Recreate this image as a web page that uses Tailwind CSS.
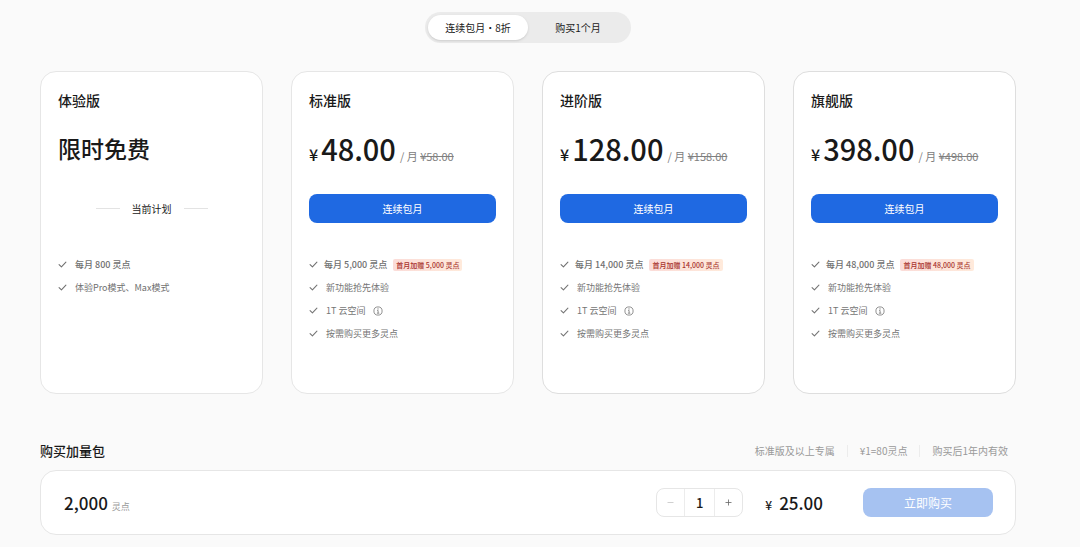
<!DOCTYPE html>
<html lang="zh-CN">
<head>
    <meta charset="UTF-8">
    <meta name="viewport" content="width=device-width, initial-scale=1.0">
    <script src="https://cdn.jsdelivr.net/npm/@tailwindcss/browser@4"></script>
    <title>购买套餐</title>
</head>
<body class="bg-[#fafafa] text-[#191919] font-['Noto_Sans_CJK_SC',sans-serif]">

    <!-- Shared icons -->
    <svg class="hidden">
        <symbol id="check" viewBox="0 0 10 10">
            <path d="M1.2 5.2 L3.8 7.6 L8.8 2.4" fill="none" stroke="currentColor" stroke-width="1.2" stroke-linecap="round" stroke-linejoin="round"/>
        </symbol>
        <symbol id="info" viewBox="0 0 10 10">
            <circle cx="5" cy="5" r="4.1" fill="none" stroke="currentColor" stroke-width="0.8"/>
            <path d="M4.2 4.5 H5.1 V7.1 M3.9 7.2 H6.3" fill="none" stroke="currentColor" stroke-width="0.8"/>
            <circle cx="5" cy="2.9" r="0.6" fill="currentColor"/>
        </symbol>
    </svg>

    <main class="pl-10 pr-16 pt-3 pb-3">
        <!-- Billing switch -->
        <div class="flex w-fit mx-auto rounded-full bg-[#ebebeb] p-[3px] text-[10px] leading-[25px]">
            <button type="button" class="w-[100px] rounded-full bg-white shadow-sm cursor-pointer">连续包月・8折</button>
            <button type="button" class="w-[100px] rounded-full cursor-pointer">购买1个月</button>
        </div>

        <!-- Plans -->
        <div class="mt-7 grid grid-cols-4 gap-7">
            <!-- Trial -->
            <section class="rounded-2xl border border-[#e6e6e6] bg-white px-[17px] pt-4 pb-12">
                <h2 class="text-[14px] leading-6 font-medium">体验版</h2>
                <p class="mt-4 text-[23px] leading-10 font-medium">限时免费</p>
                <div class="mt-[26px] flex h-[29px] items-center justify-center gap-3 text-[10px]">
                    <span class="h-px w-6 bg-[#e3e3e3]"></span>
                    <span>当前计划</span>
                    <span class="h-px w-6 bg-[#e3e3e3]"></span>
                </div>
                <ul class="mt-[30px] text-[9px] leading-[23px] text-[#707070]">
                    <li class="flex items-center gap-2 font-medium"><svg class="size-[9px]"><use href="#check"/></svg>每月 800 灵点</li>
                    <li class="flex items-center gap-2"><svg class="size-[9px]"><use href="#check"/></svg>体验Pro模式、Max模式</li>
                </ul>
            </section>

            <!-- Standard -->
            <section class="rounded-2xl border border-[#e6e6e6] bg-white px-[17px] pt-4 pb-12">
                <h2 class="text-[14px] leading-6 font-medium">标准版</h2>
                <p class="mt-4 flex h-10 items-baseline whitespace-nowrap">
                    <span class="text-[16px] font-medium">¥</span>
                    <span class="ml-[3px] text-[29px] leading-10 font-medium">48.00</span>
                    <span class="ml-1 text-[11px] text-[#808080]">/ 月 <del>¥58.00</del></span>
                </p>
                <button type="button" class="mt-[26px] h-[29px] w-full rounded-lg bg-[#1f69e2] text-[10px] text-white cursor-pointer">连续包月</button>
                <ul class="mt-[30px] text-[9px] leading-[23px] text-[#757575]">
                    <li class="flex items-center gap-[6px] whitespace-nowrap font-medium text-[#707070]"><svg class="size-[9px]"><use href="#check"/></svg>每月 5,000 灵点<span class="rounded-xs bg-linear-to-r from-[#fbdcd8] to-[#ffeadb] px-[3px] text-[7px] leading-3 text-[#a8322d]">首月加赠 5,000 灵点</span></li>
                    <li class="flex items-center gap-2"><svg class="size-[9px]"><use href="#check"/></svg>新功能抢先体验</li>
                    <li class="flex items-center gap-2"><svg class="size-[9px]"><use href="#check"/></svg>1T 云空间<svg class="size-[10px]"><use href="#info"/></svg></li>
                    <li class="flex items-center gap-2"><svg class="size-[9px]"><use href="#check"/></svg>按需购买更多灵点</li>
                </ul>
            </section>

            <!-- Advanced -->
            <section class="rounded-2xl border border-[#dedede] bg-white px-[17px] pt-4 pb-12">
                <h2 class="text-[14px] leading-6 font-medium">进阶版</h2>
                <p class="mt-4 flex h-10 items-baseline whitespace-nowrap">
                    <span class="text-[16px] font-medium">¥</span>
                    <span class="ml-[3px] text-[29px] leading-10 font-medium">128.00</span>
                    <span class="ml-1 text-[11px] text-[#808080]">/ 月 <del>¥158.00</del></span>
                </p>
                <button type="button" class="mt-[26px] h-[29px] w-full rounded-lg bg-[#1f69e2] text-[10px] text-white cursor-pointer">连续包月</button>
                <ul class="mt-[30px] text-[9px] leading-[23px] text-[#757575]">
                    <li class="flex items-center gap-[6px] whitespace-nowrap font-medium text-[#707070]"><svg class="size-[9px]"><use href="#check"/></svg>每月 14,000 灵点<span class="rounded-xs bg-linear-to-r from-[#fbdcd8] to-[#ffeadb] px-[3px] text-[7px] leading-3 text-[#a8322d]">首月加赠 14,000 灵点</span></li>
                    <li class="flex items-center gap-2"><svg class="size-[9px]"><use href="#check"/></svg>新功能抢先体验</li>
                    <li class="flex items-center gap-2"><svg class="size-[9px]"><use href="#check"/></svg>1T 云空间<svg class="size-[10px]"><use href="#info"/></svg></li>
                    <li class="flex items-center gap-2"><svg class="size-[9px]"><use href="#check"/></svg>按需购买更多灵点</li>
                </ul>
            </section>

            <!-- Ultimate -->
            <section class="rounded-2xl border border-[#dedede] bg-white px-[17px] pt-4 pb-12">
                <h2 class="text-[14px] leading-6 font-medium">旗舰版</h2>
                <p class="mt-4 flex h-10 items-baseline whitespace-nowrap">
                    <span class="text-[16px] font-medium">¥</span>
                    <span class="ml-[3px] text-[29px] leading-10 font-medium">398.00</span>
                    <span class="ml-1 text-[11px] text-[#808080]">/ 月 <del>¥498.00</del></span>
                </p>
                <button type="button" class="mt-[26px] h-[29px] w-full rounded-lg bg-[#1f69e2] text-[10px] text-white cursor-pointer">连续包月</button>
                <ul class="mt-[30px] text-[9px] leading-[23px] text-[#757575]">
                    <li class="flex items-center gap-[6px] whitespace-nowrap font-medium text-[#707070]"><svg class="size-[9px]"><use href="#check"/></svg>每月 48,000 灵点<span class="rounded-xs bg-linear-to-r from-[#fbdcd8] to-[#ffeadb] px-[3px] text-[7px] leading-3 text-[#a8322d]">首月加赠 48,000 灵点</span></li>
                    <li class="flex items-center gap-2"><svg class="size-[9px]"><use href="#check"/></svg>新功能抢先体验</li>
                    <li class="flex items-center gap-2"><svg class="size-[9px]"><use href="#check"/></svg>1T 云空间<svg class="size-[10px]"><use href="#info"/></svg></li>
                    <li class="flex items-center gap-2"><svg class="size-[9px]"><use href="#check"/></svg>按需购买更多灵点</li>
                </ul>
            </section>
        </div>

        <!-- Top-up pack -->
        <div class="mt-[46px] flex items-center justify-between pr-2">
            <h2 class="text-[13px] leading-[22px] font-medium">购买加量包</h2>
            <ul class="flex items-center text-[10px] leading-3 text-[#999] divide-x divide-[#ececec]">
                <li class="pr-3">标准版及以上专属</li>
                <li class="px-3">¥1=80灵点</li>
                <li class="pl-3">购买后1年内有效</li>
            </ul>
        </div>
        <section class="mt-2 flex items-center rounded-2xl border border-[#e6e6e6] bg-white py-[17px] pl-[23px] pr-[22px]">
            <p class="flex items-baseline gap-1">
                <span class="text-[17px] leading-[29px] font-medium">2,000</span>
                <span class="text-[9px] text-[#999]">灵点</span>
            </p>
            <div class="ml-auto flex h-[29px] w-[87px] divide-x divide-[#ececec] rounded-lg border border-[#e6e6e6]">
                <button type="button" aria-label="减少" class="flex flex-1 items-center justify-center text-[#c4c4c4]" disabled>
                    <svg class="size-[7px]" viewBox="0 0 7 7"><path d="M0.5 3.5 H6.5" stroke="currentColor" stroke-width="0.8"/></svg>
                </button>
                <input type="text" aria-label="数量" value="1" class="w-[30px] text-center text-[13px] font-medium">
                <button type="button" aria-label="增加" class="flex flex-1 items-center justify-center text-[#666] cursor-pointer">
                    <svg class="size-[7px]" viewBox="0 0 7 7"><path d="M0.5 3.5 H6.5 M3.5 0.5 V6.5" stroke="currentColor" stroke-width="0.8"/></svg>
                </button>
            </div>
            <p class="ml-[22px] flex items-baseline gap-[7px]">
                <span class="text-[12px] font-medium">¥</span>
                <span class="text-[17px] leading-[29px] font-medium">25.00</span>
            </p>
            <button type="button" class="ml-10 h-[29px] w-[130px] rounded-lg bg-[#a6c2f1] text-[12px] text-white" disabled>立即购买</button>
        </section>
    </main>

</body>
</html>
